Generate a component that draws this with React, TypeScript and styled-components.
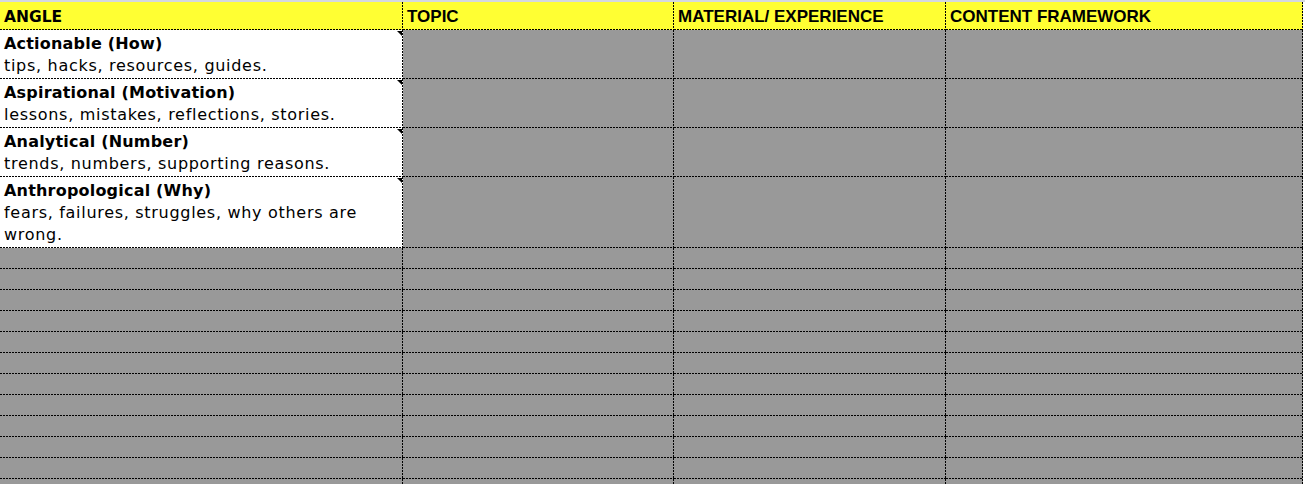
import { createGlobalStyle, styled } from "styled-components";

const COLS = [403, 271, 272, 357];
const DOT = "repeating-linear-gradient(to right, #000 0 2px, transparent 2px 3px)";
const DOT_V = "repeating-linear-gradient(to bottom, #000 0 2px, transparent 2px 3px)";

const Global = createGlobalStyle`
  html, body {
    margin: 0;
    padding: 0;
    background: #fff;
    overflow: hidden;
  }
  body {
    font-family: "DejaVu Sans", "Liberation Sans", sans-serif;
    color: #000;
  }
`;

const Sheet = styled.div`
  width: 1305px;
  height: 484px;
  border-top: 2px solid #d4d8df;
  overflow: hidden;
`;

const Grid = styled.div`
  display: grid;
  grid-template-columns: ${COLS.map((c) => `${c}px`).join(" ")};
`;

const Cell = styled.div<{ $bg: string; $h: number }>`
  position: relative;
  box-sizing: border-box;
  height: ${({ $h }) => $h}px;
  padding: 0 5px 0 4px;
  background-color: ${({ $bg }) => $bg};
  background-image: ${DOT}, ${DOT_V};
  background-size: 100% 1px, 1px 100%;
  background-position: left bottom, right top;
  background-repeat: no-repeat;
`;

const HeadCell = styled(Cell)<{ $rounded?: boolean }>`
  display: flex;
  align-items: center;
  padding-top: 1px;
  font-family: ${({ $rounded }) => ($rounded ? `"DejaVu Sans", sans-serif` : `"Liberation Sans", Arial, sans-serif`)};
  font-size: ${({ $rounded }) => ($rounded ? 15.5 : 17)}px;
  font-weight: 700;
`;

const AngleCell = styled(Cell)`
  padding-top: 3px;
  font-size: 16px;
  line-height: 22px;
  letter-spacing: 0.7px;
`;

const Title = styled.div`
  font-weight: 700;
  letter-spacing: 0.2px;
`;

const Note = styled.div`
  position: absolute;
  top: 1px;
  right: 1px;
  width: 0;
  height: 0;
  border-top: 5px solid #000;
  border-left: 5px solid transparent;
`;

const angles = [
  { title: "Actionable (How)", text: "tips, hacks, resources, guides.", h: 49 },
  { title: "Aspirational (Motivation)", text: "lessons, mistakes, reflections, stories.", h: 49 },
  { title: "Analytical (Number)", text: "trends, numbers, supporting reasons.", h: 49 },
  { title: "Anthropological (Why)", text: "fears, failures, struggles, why others are wrong.", h: 71 },
];

const headers = ["ANGLE", "TOPIC", "MATERIAL/ EXPERIENCE", "CONTENT FRAMEWORK"];
const GRAY = "#999999";

export default function App() {
  return (
    <Sheet>
      <Global />
      <Grid>
        {headers.map((h, i) => (
          <HeadCell key={h} $bg="#ffff33" $h={28} $rounded={i === 0}>
            {h}
          </HeadCell>
        ))}
        {angles.map((a) => [
          <AngleCell key={a.title} $bg="#fff" $h={a.h}>
            <Title>{a.title}</Title>
            <div>{a.text}</div>
            <Note />
          </AngleCell>,
          ...[1, 2, 3].map((c) => <Cell key={a.title + c} $bg={GRAY} $h={a.h} />),
        ])}
        {Array.from({ length: 13 }).map((_, r) =>
          COLS.map((_, c) => <Cell key={`e${r}-${c}`} $bg={GRAY} $h={21} />)
        )}
      </Grid>
    </Sheet>
  );
}
